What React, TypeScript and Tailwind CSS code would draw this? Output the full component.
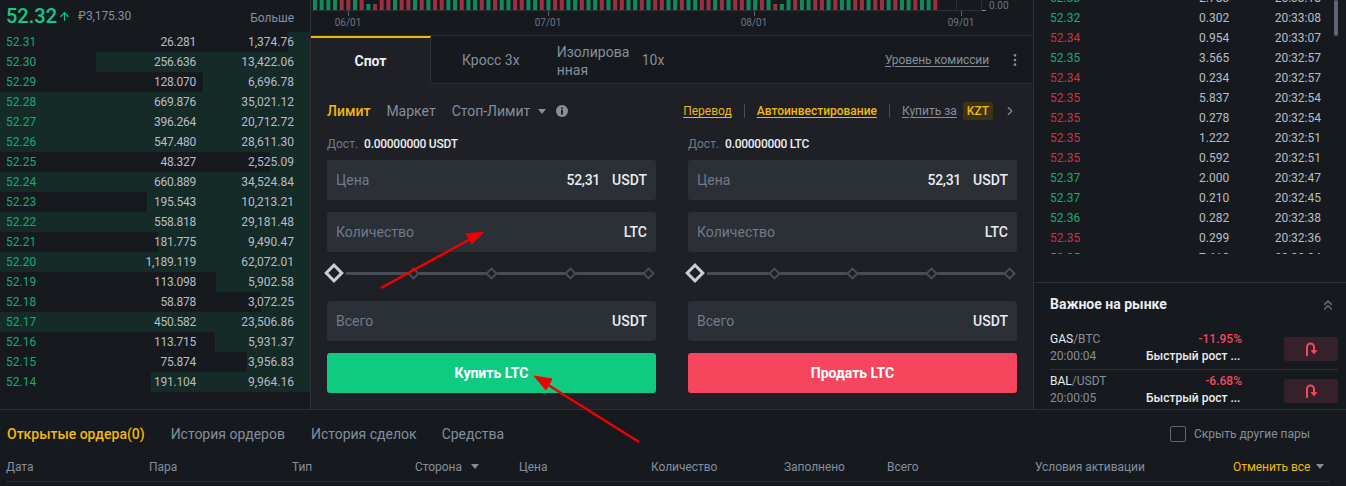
import { ArrowUp, ChevronRight, ChevronsUp, MoreVertical } from "lucide-react";

const font = "font-['Roboto','Liberation_Sans',sans-serif]";

// price, amount, total, x where the depth bar starts
const book: [string, string, string, number][] = [
  ["52.31", "26.281", "1,374.76", 288],
  ["52.30", "256.636", "13,422.06", 96],
  ["52.29", "128.070", "6,696.78", 203],
  ["52.28", "669.876", "35,021.12", 0],
  ["52.27", "396.264", "20,712.72", 0],
  ["52.26", "547.480", "28,611.30", 0],
  ["52.25", "48.327", "2,525.09", 270],
  ["52.24", "660.889", "34,524.84", 0],
  ["52.23", "195.543", "10,213.21", 147],
  ["52.22", "558.818", "29,181.48", 0],
  ["52.21", "181.775", "9,490.47", 158],
  ["52.20", "1,189.119", "62,072.01", 0],
  ["52.19", "113.098", "5,902.58", 216],
  ["52.18", "58.878", "3,072.25", 261],
  ["52.17", "450.582", "23,506.86", 0],
  ["52.16", "113.715", "5,931.37", 215],
  ["52.15", "75.874", "3,956.83", 247],
  ["52.14", "191.104", "9,964.16", 151],
];

const trades: [string, string, string, boolean][] = [
  ["52.33", "2.783", "20:33:18", true],
  ["52.32", "0.302", "20:33:08", true],
  ["52.34", "0.954", "20:33:07", false],
  ["52.35", "3.565", "20:32:57", true],
  ["52.34", "0.234", "20:32:57", false],
  ["52.35", "5.837", "20:32:54", false],
  ["52.35", "0.278", "20:32:54", false],
  ["52.35", "1.222", "20:32:51", false],
  ["52.35", "0.592", "20:32:51", false],
  ["52.37", "2.000", "20:32:47", true],
  ["52.37", "0.210", "20:32:45", true],
  ["52.36", "0.282", "20:32:38", true],
  ["52.35", "0.299", "20:32:36", false],
  ["52.35", "7.613", "20:32:34", true],
];

const candles =
  "GGGGRRGRgrRRGRRGRGRRGGRGGRGRGGRRGGRGRRGGRGGRGRRGGRGRRGGRGGRRGRGRRGGRGrgGRGGRRGRGGRRGRRGRGGRGGR";

function Caret() {
  return (
    <svg width="8" height="5" viewBox="0 0 8 5" className="shrink-0">
      <path d="M0 0h8L4 5z" fill="#848e9c" />
    </svg>
  );
}

function Chart() {
  return (
    <svg width="722" height="35" className="block shrink-0">
      {candles.split("").map((c, i) => {
        const short = c === "g" || c === "r";
        const fill = c.toLowerCase() === "g" ? "#0f8a5b" : "#9c2f41";
        return (
          <rect
            key={i}
            x={2 + i * 6.67}
            y={short ? 4 : 0}
            width={4}
            height={short ? 6 : 10}
            fill={fill}
          />
        );
      })}
      <path d="M0 10.5H671" stroke="#2b2f36" />
      <path d="M670.5 0V10.5M645.5 0V10" stroke="#2b2f36" />
      <path d="M671 10.5H675" stroke="#848e9c" />
      {[37, 237, 443, 650].map((x) => (
        <path key={x} d={`M${x}.5 11V16`} stroke="#5e6673" />
      ))}
      {[
        [37, "06/01"],
        [237, "07/01"],
        [443, "08/01"],
        [650, "09/01"],
      ].map(([x, t]) => (
        <text key={t} x={x} y={26} textAnchor="middle" fontSize="10" fill="#6b7482">
          {t}
        </text>
      ))}
      <text x={678} y={9} fontSize="10" fill="#6b7482">
        0.00
      </text>
    </svg>
  );
}

function Field({ label, value, unit }: { label: string; value?: string; unit: string }) {
  return (
    <div className="flex h-10 items-center rounded-[3px] bg-[#2b2f36] px-[9px] text-[14px]">
      <span className="text-[#707a8a]">{label}</span>
      <span className="ml-auto font-medium tracking-[-0.3px] text-[#eaecef]">{value}</span>
      <span className="ml-[12px] font-medium text-[#eaecef]">{unit}</span>
    </div>
  );
}

function Small() {
  return <div className="h-[9px] w-[9px] shrink-0 rotate-45 border-2 border-[#474d57] bg-[#1e2026]" />;
}

function Slider() {
  return (
    <div className="mt-[14px] flex h-[14px] items-center pr-[3px]">
      <div className="h-[14px] w-[14px] shrink-0 rotate-45 border-[3px] border-[#c9ced4] bg-[#1e2026]" />
      <div className="ml-[5px] h-[3px] w-[63px] bg-[#474d57]" />
      <Small />
      <div className="h-[3px] flex-1 bg-[#474d57]" />
      <Small />
      <div className="h-[3px] flex-1 bg-[#474d57]" />
      <Small />
      <div className="h-[3px] flex-1 bg-[#474d57]" />
      <Small />
    </div>
  );
}

function TradeForm({ coin, action, color, avail }: { coin: string; action: string; color: string; avail: string }) {
  return (
    <div className="w-[329px]">
      <div className="flex h-[16px] items-center text-[12px]">
        <span className="text-[#707a8a]">Дост.</span>
        <span className="ml-[6px] font-medium tracking-[-0.27px] text-[#eaecef]">{avail}</span>
      </div>
      <div className="mt-[8px] flex flex-col gap-[12px]">
        <Field label="Цена" value="52,31" unit="USDT" />
        <Field label="Количество" unit={coin} />
      </div>
      <Slider />
      <div className="mt-[21px]">
        <Field label="Всего" unit="USDT" />
      </div>
      <button className={`mt-[12px] flex h-10 w-full items-center justify-center rounded-[3px] text-[14px] font-bold text-white ${color}`}>
        {action}
      </button>
    </div>
  );
}

function UTurn() {
  return (
    <svg width="12" height="14" viewBox="0 0 12 14" fill="none" stroke="#f6465d" strokeWidth="2">
      <path d="M2 14V5a3.5 3.5 0 0 1 7 0v4" />
      <path d="M5.5 8h7L9 12.5z" stroke="none" fill="#f6465d" />
    </svg>
  );
}

function Hot({ base, quote, pct, time }: { base: string; quote: string; pct: string; time: string }) {
  return (
    <div className="flex h-[42px] items-center">
      <div className="-mt-[2px] w-[192px] text-[12px] leading-[17px]">
        <div className="flex justify-between">
          <span className="text-[#eaecef]">
            {base}
            <span className="text-[#848e9c]">/{quote}</span>
          </span>
          <span className="font-medium text-[#f6465d]">{pct}</span>
        </div>
        <div className="flex">
          <span className="w-[96px] text-[#848e9c]">{time}</span>
          <span className="font-medium text-[#eaecef]">Быстрый рост ...</span>
        </div>
      </div>
      <div className="ml-[42px] flex h-6 w-[54px] items-center justify-center rounded-[3px] bg-[#35212a]">
        <UTurn />
      </div>
    </div>
  );
}

export default function App() {
  return (
    <div className={`relative flex h-[486px] w-[1346px] flex-col overflow-hidden bg-[#161a1e] ${font}`}>
      <div className="flex h-[410px] shrink-0 border-b border-[#2b2f36]">
        {/* order book */}
        <div className="w-[311px] shrink-0 border-r border-[#2b2f36]">
          <div className="flex h-[32px] items-center pl-[6px] pr-[16px]">
            <span className="text-[20px] font-medium text-[#0ecb81]">52.32</span>
            <ArrowUp className="ml-[1px]" size={13} color="#0ecb81" strokeWidth={2} />
            <span className="ml-[7px] text-[12px] tracking-[-0.1px] text-[#848e9c]">₽3,175.30</span>
            <span className="ml-auto mt-[4px] text-[12px] text-[#848e9c]">Больше</span>
          </div>
          {book.map(([p, a, t, start]) => (
            <div key={p} className="relative flex h-5 items-center pl-[6px] pr-[16px] text-[12px] text-[#b7bdc6]">
              <div className="absolute inset-y-0 right-0 bg-[#152b28]" style={{ left: start }} />
              <span className="relative text-[#10ad72]">{p}</span>
              <span className="relative ml-auto tracking-[-0.25px]">{a}</span>
              <span className="relative w-[98px] text-right">{t}</span>
            </div>
          ))}
        </div>

        {/* chart strip and form */}
        <div className="flex w-[723px] shrink-0 flex-col border-r border-[#2b2f36]">
          <Chart />
          <div className="flex h-[49px] shrink-0 items-center border-y border-[#2b2f36]">
            <div className="-mb-px flex h-[48px] w-[120px] items-center justify-center self-start border-r border-t-2 border-[#2b2f36] border-t-[#f0b90b] bg-[#1e2026] text-[14px] font-bold text-[#eaecef]">
              Спот
            </div>
            <div className="flex items-center pt-[2px] text-[14px] text-[#848e9c]">
              <span className="ml-[31px]">Кросс 3х</span>
              <span className="ml-[37px] w-[78px] leading-[18px]">Изолирова нная</span>
              <span className="ml-[7px]">10x</span>
            </div>
            <span className="ml-auto tracking-[-0.1px] text-[12px] text-[#848e9c] underline underline-offset-2">Уровень комиссии</span>
            <MoreVertical className="ml-[18px] mr-[10px]" size={16} color="#848e9c" />
          </div>
          <div className="flex-1 bg-[#1e2026] px-4">
            <div className="flex h-[52px] items-center pt-[2px] text-[14px]">
              <span className="font-medium text-[#f0b90b]">Лимит</span>
              <span className="ml-[16px] text-[#848e9c]">Маркет</span>
              <span className="ml-[16px] text-[#848e9c]">Стоп-Лимит</span>
              <span className="ml-[8px]">
                <Caret />
              </span>
              <svg className="ml-[10px]" width="12" height="12" viewBox="0 0 12 12">
                <circle cx="6" cy="6" r="6" fill="#848e9c" />
                <rect x="5" y="5" width="2" height="4.5" fill="#1e2026" />
                <rect x="5" y="2.5" width="2" height="1.6" fill="#1e2026" />
              </svg>
              <div className="ml-auto flex items-center text-[12px]">
                <span className="text-[#f0b90b] underline underline-offset-2">Перевод</span>
                <span className="mx-[12px] h-[14px] w-px bg-[#474d57]" />
                <span className="font-medium text-[#f0b90b] underline underline-offset-2">Автоинвестирование</span>
                <span className="mx-[12px] h-[14px] w-px bg-[#474d57]" />
                <span className="text-[#848e9c] underline underline-offset-2">Купить за</span>
                <span className="ml-[6px] rounded-[2px] bg-[#3c3218] px-[4px] font-medium text-[#f0b90b]">KZT</span>
                <ChevronRight className="ml-[10px]" size={14} color="#848e9c" />
              </div>
            </div>
            <div className="flex justify-between">
              <TradeForm coin="LTC" action="Купить LTC" color="bg-[#0ecb81]" avail="0.00000000 USDT" />
              <TradeForm coin="LTC" action="Продать LTC" color="bg-[#f6465d]" avail="0.00000000 LTC" />
            </div>
          </div>
        </div>

        {/* trades and market movers */}
        <div className="flex min-w-0 flex-1 flex-col">
          <div className="relative h-[254px] shrink-0 overflow-hidden">
            <div className="-mt-[12px]">
              {trades.map(([p, a, t, up], i) => (
                <div key={i} className="flex h-5 items-center pl-[16px] pr-[25px] text-[12px] text-[#b7bdc6]">
                  <span className={`w-[149px] ${up ? "text-[#10ad72]" : "text-[#c8344b]"}`}>{p}</span>
                  <span>{a}</span>
                  <span className="ml-auto">{t}</span>
                </div>
              ))}
            </div>
            <div className="absolute right-[8px] top-0 h-[36px] w-[4px] rounded-full bg-[#5e6673]" />
          </div>
          <div className="mt-[28px] flex-1 overflow-hidden border-t border-[#2b2f36] pl-[16px] pr-[8px]">
            <div className="flex h-[43px] items-center pr-[3px]">
              <span className="text-[14px] font-bold text-[#eaecef]">Важное на рынке</span>
              <ChevronsUp className="ml-auto -mr-[1px]" size={16} color="#5e6673" strokeWidth={2.5} />
            </div>
            <div className="mt-[2px] divide-y divide-[#2b2f36]">
              <Hot base="GAS" quote="BTC" pct="-11.95%" time="20:00:04" />
              <Hot base="BAL" quote="USDT" pct="-6.68%" time="20:00:05" />
            </div>
          </div>
        </div>
      </div>

      {/* open orders */}
      <div className="flex h-[46px] shrink-0 items-center pl-[7px] pr-[36px] pt-[2px] text-[14px] text-[#848e9c]">
        <span className="font-medium text-[#f0b90b]">Открытые ордера(0)</span>
        <span className="ml-[26px]">История ордеров</span>
        <span className="ml-[26px]">История сделок</span>
        <span className="ml-[25px]">Средства</span>
        <span className="ml-auto h-4 w-4 rounded-[2px] border border-[#5e6673]" />
        <span className="ml-[8px] text-[12px]">Скрыть другие пары</span>
      </div>
      <div className="ml-[6px] mr-[16px] grid h-[26px] grid-cols-[143px_143px_123px_104px_132px_133px_103px_148px_198px_auto] items-center border-b border-[#2b2f36] pb-[4px] text-[12px] tracking-[-0.05px] text-[#848e9c]">
        <span>Дата</span>
        <span>Пара</span>
        <span>Тип</span>
        <span className="flex items-center gap-[9px]">
          Сторона <Caret />
        </span>
        <span>Цена</span>
        <span>Количество</span>
        <span>Заполнено</span>
        <span>Всего</span>
        <span>Условия активации</span>
        <span className="flex items-center gap-[6px] text-[#f0b90b]">
          Отменить все <Caret />
        </span>
      </div>

      {/* red annotation arrows */}
      <svg className="pointer-events-none absolute inset-0" width="1346" height="486" fill="none" stroke="#f00000" strokeWidth="2.5">
        <path d="M381 288L474 237" />
        <path d="M484 232L466 234L472 244z" fill="#f00000" strokeWidth="1" />
        <path d="M639 442L545 383" />
        <path d="M534 376L552 379L546 390z" fill="#f00000" strokeWidth="1" />
      </svg>
    </div>
  );
}
